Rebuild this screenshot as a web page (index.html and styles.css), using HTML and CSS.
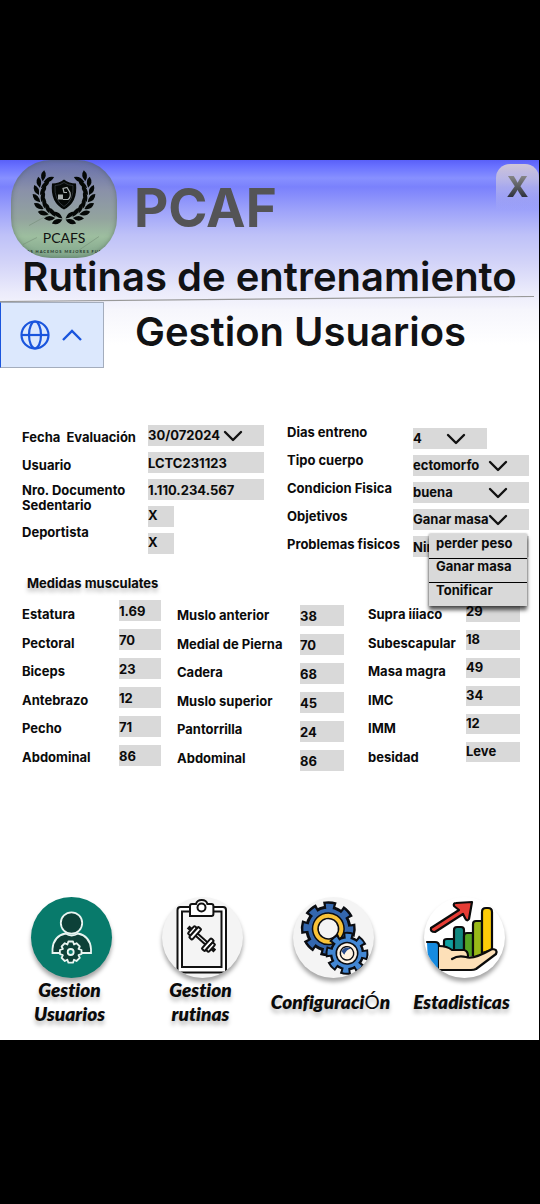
FILE: index.html
```html
<!DOCTYPE html>
<html lang="es">
<head>
<meta charset="utf-8">
<meta name="viewport" content="width=device-width, initial-scale=1">
<title>PCAF - Gestion Usuarios</title>
<link rel="stylesheet" href="styles.css">
</head>
<body>
<svg class="defs" aria-hidden="true">
  <defs>
    <g id="leaves"><path d="M1 25Q-2 32-9 30Q-7 24 1 25Z"/><path d="M1 24Q-2 17-9 18Q-7 24 1 24Z"/></g>
    <g id="branch">
      <use href="#leaves" transform="rotate(6)"/><use href="#leaves" transform="rotate(23)"/><use href="#leaves" transform="rotate(40)"/><use href="#leaves" transform="rotate(57)"/><use href="#leaves" transform="rotate(74)"/><use href="#leaves" transform="rotate(91)"/><use href="#leaves" transform="rotate(108)"/><use href="#leaves" transform="rotate(124)"/>
    </g>
    <symbol id="chevron" viewBox="0 0 20 12"><path d="M2 2l8 8 8-8" fill="none" stroke="#111" stroke-width="2.4" stroke-linecap="round" stroke-linejoin="round"/></symbol>
  </defs>
</svg>
<main class="app">
  <header class="header">
    <div class="brand">
      <svg class="logo" viewBox="0 0 106 97" role="img" aria-label="PCAFS">
        <path d="M18 65l20-11M66 91l22-15M12 84l14-7" stroke="#708873" stroke-width="1" opacity=".5"/>
        <g transform="translate(53 34)" fill="#050806">
          <use href="#branch"/><use href="#branch" transform="scale(-1 1)"/>
          <path d="M0-15Q5-11 12-11Q14 8 0 15Q-14 8-12-11Q-5-11 0-15Z"/>
          <path d="M0-12Q4-9 9-9Q10 6 0 12Q-10 6-9-9Q-4-9 0-12Z" fill="none" stroke="#4a5159" stroke-width=".6"/>
          <path d="M-6 0h5v5h-5z" fill="#aab0b0"/>
          <path d="M-1 5h5q3-2 2-7l-3-5-4 1 1 4h3" fill="none" stroke="#aab0b0" stroke-width="1.2"/>
        </g>
        <text class="logo-name" x="53" y="82" text-anchor="middle">PCAFS</text>
        <text class="logo-motto" x="53" y="92" text-anchor="middle">UNIDOS HACEMOS MEJORES FUERZAS</text>
      </svg>
      <p class="brand-name">PCAF</p>
      <button class="close" type="button" aria-label="Cerrar"><span>X</span></button>
    </div>
    <h1 class="title">Rutinas de entrenamiento</h1>
    <svg class="rule" viewBox="0 0 539 6" preserveAspectRatio="none" aria-hidden="true"><path d="M0 5.500L534 .5" stroke="#999" stroke-width="1.200"/></svg>
    <div class="subheader">
      <button class="language" type="button" aria-label="Idioma">
        <svg width="30" height="30" viewBox="0 0 30 30" fill="none" stroke="#1a55dd" stroke-width="2.200"><circle cx="15" cy="15" r="13.500"/><ellipse cx="15" cy="15" rx="6" ry="13.500"/><path d="M1.500 15h27"/></svg>
        <svg width="20" height="12" viewBox="0 0 20 12" fill="none" stroke="#1a55dd" stroke-width="2.400"><path d="M1 11l9-9 9 9"/></svg>
      </button>
      <h2 class="title">Gestion Usuarios</h2>
    </div>
  </header>

  <form class="form">
    <section class="evaluation">
      <div class="names names-left">
        <label class="wide-space" for="fecha">Fecha  Evaluación</label>
        <label for="usuario">Usuario</label>
        <label for="documento">Nro. Documento</label>
        <label for="sedentario">Sedentario</label>
        <label for="deportista">Deportista</label>
      </div>
      <div class="values">
        <div class="picker picker-date"><select id="fecha"><option>30/072024</option></select><svg><use href="#chevron"/></svg></div>
        <input id="usuario" value="LCTC231123">
        <input id="documento" value="1.110.234.567">
        <input id="sedentario" class="mark" value="X">
        <input id="deportista" class="mark" value="X">
      </div>
      <div class="names names-right">
        <label for="dias">Dias entreno</label>
        <label for="cuerpo">Tipo cuerpo</label>
        <label for="condicion">Condicion Fisica</label>
        <label for="objetivos">Objetivos</label>
        <label for="problemas">Problemas fisicos</label>
      </div>
      <div class="values values-right">
        <div class="picker picker-short"><select id="dias"><option>4</option></select><svg><use href="#chevron"/></svg></div>
        <div class="picker"><select id="cuerpo"><option>ectomorfo</option></select><svg><use href="#chevron"/></svg></div>
        <div class="picker"><select id="condicion"><option>buena</option></select><svg><use href="#chevron"/></svg></div>
        <div class="picker"><select id="objetivos"><option>Ganar masa</option></select><svg><use href="#chevron"/></svg>
          <ul class="menu">
            <li><button type="button">perder peso</button></li>
            <li><button type="button">Ganar masa</button></li>
            <li><button type="button">Tonificar</button></li>
          </ul>
        </div>
        <input id="problemas" value="Ninguno">
      </div>
    </section>

    <h3 class="section-title">Medidas musculates</h3>

    <section class="measures">
      <div class="names">
        <label for="m1">Estatura</label><label for="m2">Pectoral</label><label for="m3">Biceps</label><label for="m4">Antebrazo</label><label for="m5">Pecho</label><label for="m6">Abdominal</label>
      </div>
      <div class="values">
        <input id="m1" value="1.69"><input id="m2" value="70"><input id="m3" value="23"><input id="m4" value="12"><input id="m5" value="71"><input id="m6" value="86">
      </div>
      <div class="names names-mid">
        <label for="n1">Muslo anterior</label><label for="n2">Medial de Pierna</label><label for="n3">Cadera</label><label for="n4">Muslo superior</label><label for="n5">Pantorrilla</label><label for="n6">Abdominal</label>
      </div>
      <div class="values values-mid">
        <input id="n1" value="38"><input id="n2" value="70"><input id="n3" value="68"><input id="n4" value="45"><input id="n5" value="24"><input id="n6" value="86">
      </div>
      <div class="names names-end">
        <label for="s1">Supra iíiaco</label><label for="s2">Subescapular</label><label for="s3">Masa magra</label><label for="s4">IMC</label><label for="s5">IMM</label><label for="s6">besidad</label>
      </div>
      <div class="values values-end">
        <input id="s1" value="29"><input id="s2" value="18"><input id="s3" value="49"><input id="s4" value="34"><input id="s5" value="12"><input id="s6" value="Leve">
      </div>
    </section>
  </form>

  <nav class="nav">
    <a href="#usuarios">
      <svg class="disc disc-green" viewBox="0 0 81 81" fill="#0d4138" stroke="#e8f5f1" stroke-width="1.800" aria-hidden="true">
        <circle cx="40.500" cy="26" r="10.700"/>
        <path d="M21.500 56v-4q1-13 13-15.500 6 4 12.500 0 12 2.500 13 15.500v4z"/>
        <path stroke-linejoin="round" d="M37.400 44.500h4.600l1 3 2.500-1.300 3.300 3.300-1.300 2.500 3 1v4l-3 1.200 1.300 2.600-3.300 3.200-2.500-1.300-1 3h-4.600l-1-3-2.600 1.300-3.200-3.200 1.300-2.600-3-1.200v-4l3-1-1.300-2.500 3.200-3.300 2.600 1.300z"/>
        <circle cx="39.700" cy="55" r="3" fill="#087a6b"/>
      </svg>
      <span>Gestion Usuarios</span>
    </a>
    <a href="#rutinas">
      <svg class="disc disc-grey" viewBox="0 0 81 81" fill="none" stroke="#111" stroke-width="2" aria-hidden="true">
        <path fill="#fff" d="M15.500 75.500V13q0-3 3-3h42.500q3 0 3 3v62.500z"/>
        <path fill="#f4f4f4" d="M20 14.500h39.500V70H20z"/>
        <path fill="#fff" d="M28 19V9q0-2 2-2h4q1-4 5.700-4t5.700 4h4q2 0 2 2v8q0 2-2 2z"/>
        <circle cx="39.500" cy="10.500" r="4"/>
        <g transform="translate(39.500 42) rotate(42)" fill="#fff">
          <path d="M-7-1.500H7v3H-7zM-17-1h3v2h-3zM14-1h3v2h-3z"/>
          <rect x="-14" y="-5" width="3.500" height="10" rx="1"/><rect x="-10.500" y="-7" width="4" height="14" rx="1"/>
          <rect x="6.500" y="-7" width="4" height="14" rx="1"/><rect x="10.500" y="-5" width="3.500" height="10" rx="1"/>
        </g>
      </svg>
      <span>Gestion rutinas</span>
    </a>
    <a href="#configuracion">
      <svg class="disc disc-grey" viewBox="0 0 81 81" fill="none" aria-hidden="true">
        <g transform="translate(35.300 31.700) rotate(-11)">
          <circle r="23.500" stroke="#0b0d12" stroke-width="8" pathLength="80" stroke-dasharray="6.400 3.600"/>
          <circle r="21.500" fill="#3467ae" stroke="#0b0d12" stroke-width="3"/>
          <circle r="22" stroke="#3467ae" stroke-width="6" pathLength="80" stroke-dasharray="4 6" stroke-dashoffset="-1.200"/>
          <circle r="13.500" fill="#0b0d12" stroke="#0b0d12" stroke-width="6"/>
          <circle r="13" stroke="#f9c338" stroke-width="4"/>
          <circle r="9.500" fill="#f4f4f4"/>
        </g>
        <g transform="translate(54 56.300) rotate(-11)">
          <circle r="17.500" stroke="#0b0d12" stroke-width="8" pathLength="80" stroke-dasharray="6.800 3.200"/>
          <circle r="16" fill="#4387d3" stroke="#0b0d12" stroke-width="2.500"/>
          <circle r="16.500" stroke="#4387d3" stroke-width="6" pathLength="80" stroke-dasharray="4 6" stroke-dashoffset="-1.400"/>
          <circle r="11.500" fill="#0b0d12"/><circle r="8.700" stroke="#fff3e2" stroke-width="2.600"/>
          <circle r="6" fill="#fff3e2"/><path d="M-5-3Q-1-8 5-4Q0-4-3 1z" fill="#274c8c"/>
        </g>
      </svg>
      <span class="single">Configuraci<span class="accent">Ó</span>n</span>
    </a>
    <a href="#estadisticas">
      <svg class="disc disc-white" viewBox="0 0 81 81" stroke="#0b0b0b" stroke-width="2.200" stroke-linejoin="round" stroke-linecap="round" aria-hidden="true">
        <path fill="#e63d35" d="M7 31L35 13l-5-4q-1-3 2-3l16-1-3 17q-2 3-4-1l-2-4-28 18q-5 0-4-4z"/>
        <path fill="#10a0a0" d="M20 56V44q0-2 3-2h8v14z"/>
        <path fill="#118880" d="M30 56V33q0-3 3-3h4q3 0 3 3v23z"/>
        <path fill="#57a522" d="M40 60V39q0-3 3-3h6v24z"/>
        <path fill="#99b818" d="M49 60V27q0-3 3-3h6v36z"/>
        <path fill="#fccb08" d="M58 56V15q0-4 4-4h2q4 0 4 4v38z"/>
        <path fill="#168be0" stroke="none" d="M3 46h12v28L4 64z"/>
        <path fill="none" d="M3 45h8q4 0 4 4v24"/>
        <path fill="#fde0b8" stroke="none" d="M15 49q8 0 13 4h12q4 1 4 6h8l16-7q6-1 5 4L50 73H15z"/>
        <path fill="none" d="M15 49q8 0 13 4h12q4 1 4 6M28 62q6-4 14-2 7 3 26-8 6 0 4 5L52 72q-2 1-5 1H15"/>
      </svg>
      <span class="single">Estadisticas</span>
    </a>
  </nav>
</main>
</body>
</html>
```
FILE: styles.css
```css
* { box-sizing: border-box; }

body {
  margin: 0;
  padding: 160px 1px 160px 0;
  background: #000;
  color: #0b0b0b;
  font: 700 13px/15px Inter, "Liberation Sans", sans-serif;
}

h1, h2, h3, p, ul { margin: 0; padding: 0; }
button, input, select { font: inherit; color: inherit; border: 0; border-radius: 0; margin: 0; }
.defs { position: absolute; width: 0; height: 0; }

.app { background: #fff; padding-bottom: 14px; }

.header {
  background: linear-gradient(#5960f8 0, #6870ff 6px, #8790ff 18px, #7a81fc 27px, #9da2fa 50px, #bec1f8 75px, #d2d3f8 102px, #ebebfb 132px, #f6f6fc 150px, #fff 185px);
}
.brand { display: flex; align-items: flex-start; padding-left: 11px; }
.logo {
  width: 106px;
  height: 98px;
  border-radius: 40px;
  background: linear-gradient(#646cac, #8990a9 30%, #93a49e 60%, #9dbe9f 78%, #80a58a);
  box-shadow: inset 0 0 5px rgba(60, 80, 70, .5);
}
.logo-name { font: 400 14px Lato, sans-serif; fill: #111; }
.logo-motto { font: 700 4px Lato, sans-serif; fill: #253329; letter-spacing: 1px; }
.brand-name { flex: 1; margin-left: 17px; font-size: 53px; font-weight: 700; line-height: 96px; color: #545456; }
.close {
  width: 43px;
  height: 46px;
  margin-top: 4px;
  padding: 0;
  border-radius: 14px 14px 0 0;
  background: linear-gradient(#cfc6d8, rgba(185, 185, 235, .6) 60%, transparent);
}
.close span {
  display: block;
  font-size: 29px;
  font-weight: 800;
  line-height: 46px;
  background: linear-gradient(#888 25%, #282c38 75%);
  background-clip: text;
  color: transparent;
}
.title { font-size: 40px; font-weight: 600; line-height: 40px; text-align: center; color: #111214; }
h1.title { line-height: 38px; }
.rule { display: block; width: 100%; height: 6px; }
.subheader { display: flex; align-items: flex-start; gap: 31px; }
.subheader .title { padding-top: 10px; }
.language {
  display: flex;
  align-items: center;
  justify-content: center;
  gap: 12px;
  width: 104px;
  height: 66px;
  padding: 0 2px 0 0;
  background: #dce8fd;
  border: 1px solid #a4adbd;
  border-left-color: #1a55dd;
}

.form { padding-top: 57px; }
.evaluation {
  display: grid;
  grid-template-columns: 126fr 139fr 126fr 116fr;
  padding: 0 10px 0 22px;
}
.names { display: flex; flex-direction: column; white-space: nowrap; }
.wide-space { white-space: pre; }
.names-left { padding-top: 5px; }
.names-left label:nth-child(2) { margin-top: 13px; }
.names-left label:nth-child(3) { margin-top: 10px; }
.names-left label:nth-child(5) { margin-top: 12px; }
.names-right { gap: 13px; }
.values { display: grid; align-content: start; gap: 6px; }
.evaluation .values > * { width: 116px; }
.evaluation .values-right > * { width: 100%; }
.evaluation .values > .mark { width: 26px; padding-bottom: 3px; }
.evaluation .values > .picker-short { width: 74px; }
.values-right { padding-top: 3px; }

input, .picker { display: block; width: 100%; height: 21px; padding: 0; background: #d9d9d9; }
.picker { position: relative; display: grid; grid-template-columns: 100%; }
.picker select {
  grid-area: 1 / 1;
  width: 100%;
  height: 21px;
  padding: 0;
  appearance: none;
  background: transparent;
}
.picker > svg {
  grid-area: 1 / 1;
  place-self: center end;
  width: 20px;
  height: 12px;
  margin-right: 21px;
  pointer-events: none;
}
.menu {
  position: absolute;
  z-index: 1;
  top: 25px;
  left: 16px;
  right: 2px;
  list-style: none;
  background: #d9d9d9;
  box-shadow: 0 4px 4px rgba(0, 0, 0, .65), 0 0 2px rgba(0, 0, 0, .4);
}
.menu li + li { border-top: 1px solid #000; }
.menu button { display: block; width: 100%; height: 24px; padding: 0 0 6px 7px; text-align: left; background: none; white-space: nowrap; }
.menu li + li button { height: 23px; padding-bottom: 8px; }

.section-title { padding: 19px 0 9px 27px; font-size: 13px; font-weight: 700; line-height: 15px; text-shadow: 0 4px 4px rgba(0, 0, 0, .25); }

.measures {
  display: grid;
  grid-template-columns: 97fr 58fr 123fr 68fr 98fr 54fr;
  padding: 0 19px 0 22px;
}
.measures .names { padding-top: 7px; height: 165px; justify-content: space-between; }
.measures .names-mid { padding-top: 8px; height: 166px; }
.measures .values { gap: 8px; padding-right: 16px; }
.measures .values-mid { padding: 5px 24px 0 0; }
.measures .values-end { padding: 2px 0 0; }
.measures .values-end input { height: 20px; padding-bottom: 2px; }
.measures .values-end input:last-child { padding-bottom: 3px; }

.nav { display: grid; grid-template-columns: repeat(4, 1fr); padding: 126px 9px 0 6px; }
.nav a {
  display: flex;
  flex-direction: column;
  align-items: center;
  color: #0b0b0b;
  text-decoration: none;
  text-align: center;
  font: italic 800 19px/24px Lato, "Open Sans", sans-serif;
  font-variant-ligatures: none;
  text-shadow: 0 4px 4px rgba(0, 0, 0, .25);
}
.nav a > span { width: 100%; padding: 0 26px 0 22px; }
.nav a > .single { padding: 12px 6px 12px 0; }
.accent { font-style: normal; font-weight: 400; }
.disc { width: 81px; height: 81px; border-radius: 50%; box-shadow: 0 4px 4px rgba(0, 0, 0, .35); }
.disc-green { background: #087a6b; }
.disc-grey { background: #f4f4f4; }
.disc-white { background: #fff; }
```
